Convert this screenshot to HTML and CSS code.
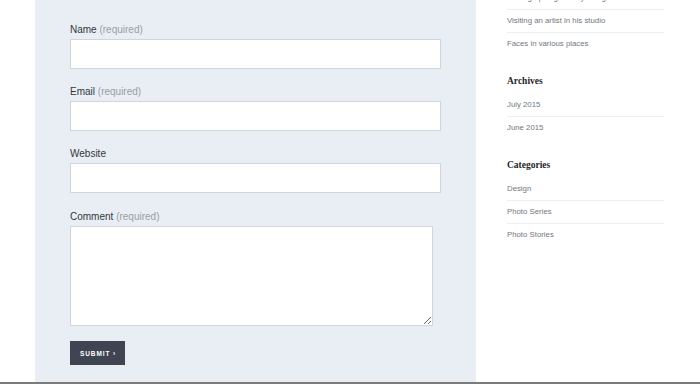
FILE: index.html
```html
<!DOCTYPE html>
<html>
<head>
<meta charset="utf-8">
<link rel="stylesheet" href="styles.css">
</head>
<body>
<div class="page">
  <main class="panel">
    <form class="comment-form">
      <div class="field">
        <label class="label">Name <span class="req">(required)</span></label>
        <input class="input" type="text">
      </div>
      <div class="field">
        <label class="label">Email <span class="req">(required)</span></label>
        <input class="input" type="text">
      </div>
      <div class="field">
        <label class="label">Website</label>
        <input class="input" type="text">
      </div>
      <div class="field field-comment">
        <label class="label">Comment <span class="req">(required)</span></label>
        <textarea class="textarea"></textarea>
      </div>
      <button class="submit" type="button">SUBMIT ›</button>
    </form>
  </main>
  <aside class="sidebar">
    <section class="widget first">
      <ul class="list">
        <li class="item">Photographing the city at night</li>
        <li class="item">Visiting an artist in his studio</li>
        <li class="item">Faces in various places</li>
      </ul>
    </section>
    <section class="widget">
      <h3 class="widget-title">Archives</h3>
      <ul class="list">
        <li class="item">July 2015</li>
        <li class="item">June 2015</li>
      </ul>
    </section>
    <section class="widget">
      <h3 class="widget-title">Categories</h3>
      <ul class="list">
        <li class="item">Design</li>
        <li class="item">Photo Series</li>
        <li class="item">Photo Stories</li>
      </ul>
    </section>
  </aside>
</div>
</body>
</html>
```
FILE: styles.css
```css
html, body {
  margin: 0;
  padding: 0;
  background: #ffffff;
  overflow: hidden;
}
body {
  font-family: "Liberation Sans", Arial, sans-serif;
}
.page {
  display: flex;
  height: 382px;
  border-bottom: 2px solid #7b7b7b;
  overflow: hidden;
}
.panel {
  margin-left: 35px;
  width: 441px;
  background: #e8eef3;
  padding: 22px 0 0 35px;
  box-sizing: border-box;
}
.comment-form {
  display: flex;
  flex-direction: column;
}
.field {
  display: flex;
  flex-direction: column;
  margin-bottom: 15px;
}
.field-comment {
  margin-top: 1px;
}
.label {
  font-size: 10px;
  line-height: 15px;
  color: #33373d;
  margin-bottom: 2px;
}
.req {
  color: #9a9ea3;
}
.input {
  width: 371px;
  height: 30px;
  box-sizing: border-box;
  border: 1px solid #cdd6de;
  background: #ffffff;
  margin: 0;
  padding: 0 8px;
  outline: none;
}
.textarea {
  display: block;
  width: 363px;
  height: 100px;
  box-sizing: border-box;
  border: 1px solid #cdd6de;
  background: #ffffff;
  margin: 0;
  padding: 6px 8px;
  resize: both;
  outline: none;
}
.submit {
  align-self: flex-start;
  width: 55px;
  height: 24px;
  margin: 0;
  padding: 0 0 0 1px;
  border: none;
  background: #3e4452;
  color: #ffffff;
  font-family: "Liberation Sans", Arial, sans-serif;
  font-weight: 700;
  font-size: 6.5px;
  letter-spacing: 0.9px;
}
.sidebar {
  margin-left: 31px;
  width: 157px;
  margin-top: -14px;
}
.widget {
  margin-bottom: 19px;
}
.widget-title {
  margin: 0 0 5px 0;
  font-family: "Liberation Serif", "Times New Roman", serif;
  font-weight: 700;
  font-size: 9.5px;
  line-height: 14px;
  color: #24262a;
}
.list {
  list-style: none;
  margin: 0;
  padding: 0;
}
.item {
  font-size: 7.8px;
  line-height: 23px;
  color: #727780;
}
.item + .item {
  border-top: 1px solid #eceef1;
  line-height: 22px;
}
```
